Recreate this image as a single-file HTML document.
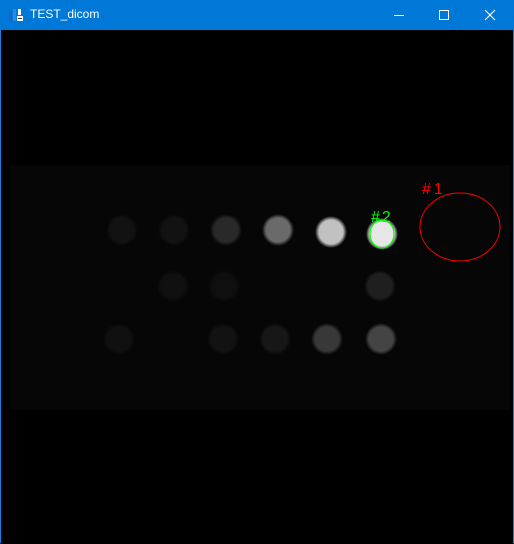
<!DOCTYPE html>
<html><head><meta charset="utf-8"><style>
html,body{margin:0;padding:0;background:#000;}
body{width:514px;height:544px;position:relative;overflow:hidden;font-family:"Liberation Sans",sans-serif;}
.frame{position:absolute;left:0;top:0;width:512px;height:542px;border:1px solid #1a7fd6;border-top:none;}
.tb{position:absolute;left:0;top:0;width:514px;height:30px;background:#0078d7;color:#fff;}
.tb .t{position:absolute;left:30px;top:7px;font-size:12px;}
</style></head><body>
<div class="frame"></div>
<svg style="position:absolute;left:1px;top:30px" width="512" height="513" viewBox="1 30 512 513">
<defs>
<radialGradient id="g"><stop offset="0.75" stop-color="#fff"/><stop offset="1" stop-color="#fff" stop-opacity="0"/></radialGradient>
</defs>
<rect x="1" y="30" width="512" height="513" fill="#000"/>
<rect x="10" y="165" width="500" height="245" fill="#060606"/>
<g fill="url(#g)">
<circle cx="122" cy="230" r="16" opacity="0.05"/>
<circle cx="174" cy="230" r="16" opacity="0.05"/>
<circle cx="226" cy="230" r="16" opacity="0.14"/>
<circle cx="278" cy="230" r="16" opacity="0.4"/>
<circle cx="331" cy="232" r="16" opacity="0.75"/>
<circle cx="382" cy="234" r="16" opacity="0.9"/>
<circle cx="173" cy="286" r="16" opacity="0.04"/>
<circle cx="224" cy="286" r="16" opacity="0.035"/>
<circle cx="380" cy="286" r="16" opacity="0.1"/>
<circle cx="119" cy="339" r="16" opacity="0.04"/>
<circle cx="223" cy="339" r="16" opacity="0.05"/>
<circle cx="275" cy="339" r="16" opacity="0.07"/>
<circle cx="327" cy="339" r="16" opacity="0.2"/>
<circle cx="381" cy="339" r="16" opacity="0.25"/>
</g>
<ellipse cx="460" cy="227" rx="40" ry="34" fill="none" stroke="#f00" stroke-width="1"/>
<text x="422" y="194" fill="#f00" font-size="16" letter-spacing="3" font-family="Liberation Sans">#1</text>
<ellipse cx="382" cy="234" rx="12" ry="14" fill="none" stroke="#0f0" stroke-width="1.2"/>
<text x="371" y="222" fill="#0f0" font-size="16" letter-spacing="2" font-family="Liberation Sans">#2</text>
</svg>
<div class="tb">
<svg style="position:absolute;left:9px;top:8px" width="14" height="15">
<rect x="0" y="3" width="3" height="10" fill="#1e64c8"/><rect x="4" y="1" width="3" height="12" fill="#2a8ae8"/>
<rect x="9" y="1" width="3" height="6" fill="#fff"/><rect x="8" y="8" width="6" height="5" fill="#fff"/><rect x="9" y="10" width="4" height="1" fill="#333"/>
</svg>
<div class="t">TEST_dicom</div>
<svg style="position:absolute;left:380px;top:0" width="134" height="30">
<line x1="14" y1="15.5" x2="24" y2="15.5" stroke="#fff" stroke-width="1"/>
<rect x="59.5" y="10.5" width="9" height="9" fill="none" stroke="#fff" stroke-width="1"/>
<path d="M105 10 L115 20 M115 10 L105 20" stroke="#fff" stroke-width="1.2"/>
</svg>
</div>
</body></html>
